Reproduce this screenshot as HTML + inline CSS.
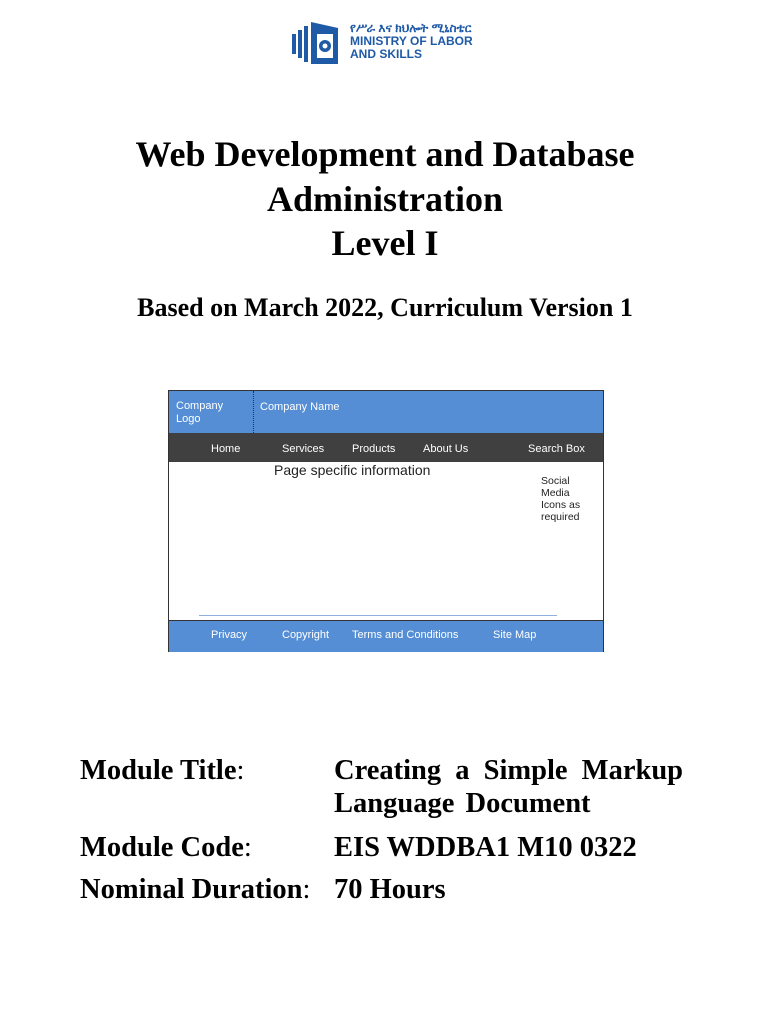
<!DOCTYPE html>
<html><head><meta charset="utf-8"><style>
body{margin:0;width:770px;height:1024px;background:#fff;position:relative;overflow:hidden;font-family:"Liberation Serif",serif}
.a{position:absolute;white-space:nowrap}
.t{left:0;width:770px;text-align:center;font-weight:bold;font-size:36px;color:#000}
.w{font-family:"Liberation Sans",sans-serif;font-size:11px;color:#fff;position:absolute;white-space:nowrap}
.m{font-size:28.5px;font-weight:bold}
.l{font-size:28.5px}
</style></head><body>
<svg class="a" style="left:290px;top:20px" width="60" height="46" viewBox="0 0 60 46">
<rect x="2" y="14" width="4" height="20" fill="#1f5aa6"/>
<rect x="8" y="10" width="4" height="28" fill="#1f5aa6"/>
<rect x="14" y="6" width="4" height="36" fill="#1f5aa6"/>
<path d="M21 2 L48 8 L48 44 L21 44 Z" fill="#1f5aa6"/>
<rect x="27" y="14" width="16" height="24" fill="#fff"/>
<circle cx="35" cy="26" r="6" fill="#1f5aa6"/><circle cx="35" cy="26" r="2.5" fill="#fff"/>
</svg>
<div class="a" style="left:350px;top:22px;font-family:'Liberation Sans',sans-serif;font-size:12px;font-weight:bold;color:#1f5aa6;line-height:13px">የሥራ እና ክህሎት ሚኒስቴር<br>MINISTRY OF LABOR<br>AND SKILLS</div>
<div class="a t" style="top:133px">Web Development and Database</div>
<div class="a t" style="top:178px">Administration</div>
<div class="a t" style="top:222px">Level I</div>
<div class="a t" style="top:293px;font-size:26px">Based on March 2022, Curriculum Version 1</div>
<div class="a" style="left:168px;top:390px;width:434px;height:260px;border:1px solid #333;background:#fff">
<div style="position:absolute;left:0;top:0;width:434px;height:42px;background:#558ed5"></div>
<div style="position:absolute;left:84px;top:0;height:42px;border-left:1px dotted #234"></div>
<div style="position:absolute;left:0;top:42px;width:434px;height:29px;background:#404040"></div>
<div style="position:absolute;left:0;top:229px;width:434px;height:31px;background:#558ed5;border-top:1px solid #333"></div>
<div style="position:absolute;left:30px;top:224px;width:358px;height:1px;background:#8fb0e0"></div>
<div class="w" style="left:7px;top:9px;line-height:13px">Company<br>Logo</div>
<div class="w" style="left:91px;top:10px">Company Name</div>
<div class="w" style="left:42px;top:52px">Home</div>
<div class="w" style="left:113px;top:52px">Services</div>
<div class="w" style="left:183px;top:52px">Products</div>
<div class="w" style="left:254px;top:52px">About Us</div>
<div class="w" style="left:359px;top:52px">Search Box</div>
<div class="w" style="left:105px;top:71px;font-size:14px;color:#222">Page specific information</div>
<div class="w" style="left:372px;top:84px;color:#222;line-height:12px;font-size:10.5px">Social<br>Media<br>Icons as<br>required</div>
<div class="w" style="left:42px;top:238px">Privacy</div>
<div class="w" style="left:113px;top:238px">Copyright</div>
<div class="w" style="left:183px;top:238px">Terms and Conditions</div>
<div class="w" style="left:324px;top:238px">Site Map</div>
</div>
<div class="a l" style="left:80px;top:755px"><b>Module Title</b>:</div>
<div class="a m" style="left:334px;top:755px;word-spacing:7px">Creating a Simple Markup</div>
<div class="a m" style="left:334px;top:788px;word-spacing:4px">Language Document</div>
<div class="a l" style="left:80px;top:832px"><b>Module Code</b>:</div>
<div class="a m" style="left:334px;top:832px">EIS WDDBA1 M10 0322</div>
<div class="a l" style="left:80px;top:874px"><b>Nominal Duration</b>:</div>
<div class="a m" style="left:334px;top:874px">70 Hours</div>
</body></html>
